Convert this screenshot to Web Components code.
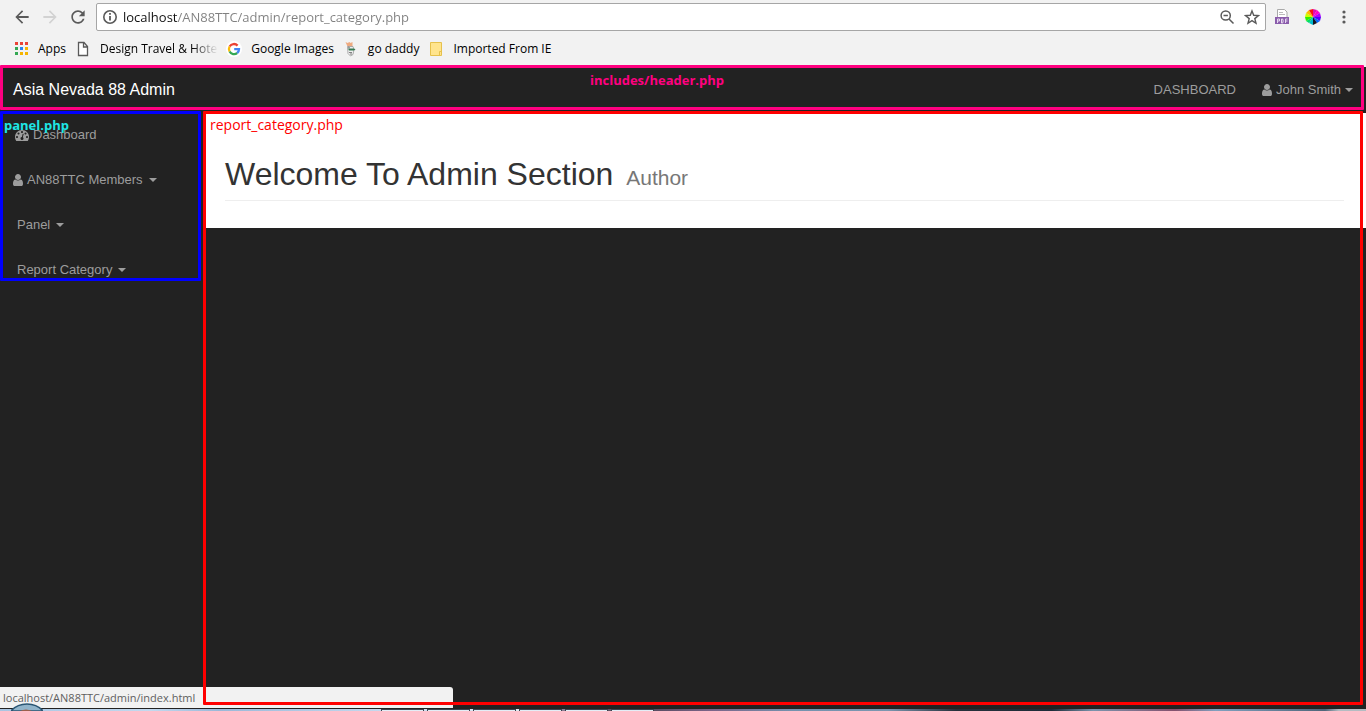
<!DOCTYPE html>
<html lang="en">
<head>
<meta charset="utf-8">
<title>Asia Nevada 88 Admin</title>
<style>
  body { margin: 0; background: #222; }
</style>
</head>
<body>
<app-window></app-window>

<template id="tpl-toolbar">
  <style>
    :host { display: block; height: 67px; box-sizing: border-box; background: #f2f2f2; font: 13px/20px "Open Sans", sans-serif; color: #000; }
    .row { display: flex; align-items: center; height: 34px; box-sizing: border-box; padding: 0 12px; }
    button { border: 0; background: none; padding: 0; margin: 0; display: flex; align-items: center; justify-content: center; width: 20px; height: 20px; color: #5a5a5a; flex: none; }
    button:disabled { color: #d2d2d2; }
    svg { display: block; }
    .nav { display: flex; gap: 8px; }
    .address { flex: 1; display: flex; align-items: center; gap: 5px; height: 26px; margin-left: 8px; padding: 0 3px 0 5px; background: #fff; border: 1px solid #a6a6a6; border-radius: 2px; }
    input { flex: 1; min-width: 0; border: 0; outline: 0; padding: 0; margin: 0; height: 22px; font: inherit; color: transparent; background: linear-gradient(90deg, #111 55px, #808080 55px); -webkit-background-clip: text; background-clip: text; }
    .actions { display: flex; gap: 5px; }
    .ext { display: flex; gap: 11px; margin-left: 6px; }
    nav { display: flex; align-items: center; height: 29px; padding: 0 14px; font-size: 12px; gap: 9px; }
    a { display: flex; align-items: center; gap: 9px; color: inherit; text-decoration: none; white-space: nowrap; }
    .fade { -webkit-mask-image: linear-gradient(90deg, #000 92px, transparent 118px); mask-image: linear-gradient(90deg, #000 92px, transparent 118px); }
  </style>
  <div class="row">
    <div class="nav">
      <button aria-label="Back"><svg width="20" height="20" viewBox="0 0 24 24" fill="currentColor"><path d="M20 10.7H7.8l5.6-5.3L12 4l-8 8 8 8 1.4-1.4-5.6-5.3H20z"/></svg></button>
      <button aria-label="Forward" disabled><svg width="20" height="20" viewBox="0 0 24 24" fill="currentColor"><path d="M4 10.7h12.2l-5.6-5.3L12 4l8 8-8 8-1.4-1.4 5.6-5.3H4z"/></svg></button>
      <button aria-label="Reload"><svg width="22" height="22" viewBox="0 0 24 24" fill="currentColor"><path d="M17.65 6.35C16.2 4.9 14.21 4 12 4c-4.42 0-7.99 3.58-7.99 8s3.57 8 7.99 8c3.73 0 6.84-2.55 7.73-6h-2.08c-.82 2.33-3.04 4-5.65 4-3.31 0-6-2.69-6-6s2.69-6 6-6c1.66 0 3.14.69 4.22 1.78L13 11h7V4l-2.35 2.35z"/></svg></button>
    </div>
    <div class="address">
      <svg width="16" height="16" viewBox="0 0 16 16" fill="none" stroke="#5a5a5a"><circle cx="8" cy="8" r="6.2" stroke-width="1.6"/><path d="M8 7v4.5M8 4v1.7" stroke-width="1.8"/></svg>
      <input type="text" aria-label="Address" value="localhost/AN88TTC/admin/report_category.php" spellcheck="false">
      <div class="actions">
        <button aria-label="Zoom"><svg width="16" height="16" viewBox="0 0 16 16" fill="none" stroke="currentColor" stroke-width="1.5"><circle cx="6.7" cy="6.5" r="4.6"/><path d="M4.5 6.5h4.4M10 10l4.5 4.5"/></svg></button>
        <button aria-label="Bookmark this page"><svg width="16" height="16" viewBox="0 0 16 16" fill="none" stroke="currentColor" stroke-width="1.4"><path d="M8 1.9l1.7 4.4 4.8.3-3.7 3 1.2 4.7L8 11.700l-4 2.600 1.200-4.700-3.700-3 4.800-.3z"/></svg></button>
      </div>
    </div>
    <div class="ext">
      <button aria-label="PDF tools"><svg width="16" height="18" viewBox="0 0 16 18"><path d="M3.500 9V1.500h7l2.500 2.500V9" fill="#fff" stroke="#aaa"/><path d="M5 4.500h4M5 6.500h6" stroke="#bbb"/><path d="M1 9h14v7H1z" fill="#8a5cab"/><path d="M3.500 15v-4h2v2h-2M7.500 11v4h1.200q1-2 0-4zM11.500 15v-4h2M11.500 13h2" fill="none" stroke="#e6d8f0"/></svg></button>
      <button aria-label="Colour picker"><svg width="16" height="16" viewBox="0 0 16 16"><path d="M8 8V0L12 1z" fill="#e010b0"/><path d="M8 8l4-7 3 3z" fill="#f0c"/><path d="M8 8l7-4 1 4z" fill="#a0f"/><path d="M8 8h8l-1 4z" fill="#50f"/><path d="M8 8l7 4-3 2z" fill="#06f"/><path d="M8 8l4 6-4 2z" fill="#112"/><path d="M8 8v8l-4-2z" fill="#0bc"/><path d="M8 8l-4 6-3-2z" fill="#0d6"/><path d="M8 8l-7 4-1-4z" fill="#3e0"/><path d="M8 8H0l1-4z" fill="#cf0"/><path d="M8 8L1 4l3-3z" fill="#fb0"/><path d="M8 8L4 1l4-1z" fill="#f11"/></svg></button>
      <button aria-label="Menu"><svg width="16" height="16" viewBox="0 0 16 16" fill="currentColor"><circle cx="8" cy="3" r="1.600"/><circle cx="8" cy="8" r="1.600"/><circle cx="8" cy="13" r="1.600"/></svg></button>
    </div>
  </div>
  <nav aria-label="Bookmarks">
    <a href="#apps"><svg width="15" height="15" viewBox="0 0 15 15"><path d="M1 1h3v3H1zM6 1h3v3H6zM11 1h3v3h-3z" fill="#ea4335"/><path d="M1 6h3v3H1zM1 11h3v3H1z" fill="#34a853"/><path d="M6 6h3v3H6z" fill="#2a84f0"/><path d="M11 6h3v3h-3zM6 11h3v3H6zM11 11h3v3h-3z" fill="#f5b400"/></svg><span>Apps</span></a>
    <a href="#design"><svg width="16" height="16" viewBox="0 0 16 16" fill="#fff" stroke="#5a5a5a" stroke-width="1.300"><path d="M3.500 1.500h5.500l3.500 4v9h-9zM8.500 1.500v4.500h4"/></svg><span class="fade">Design Travel &amp; Hote</span></a>
    <a href="#images"><svg width="16" height="16" viewBox="0 0 16 16" fill="none" stroke-width="2.300"><circle cx="8" cy="8" r="8" fill="#fff" stroke="none"/><path d="M3.600 5.500A5 5 0 0 1 11.600 4.600" stroke="#ea4335"/><path d="M3.600 5.500a5 5 0 0 0 0 5" stroke="#fbbc05"/><path d="M3.600 10.500a5 5 0 0 0 7.600 1.500" stroke="#34a853"/><path d="M11.200 12A5 5 0 0 0 13 8.200H8.200" stroke="#4285f4"/></svg><span>Google Images</span></a>
    <a href="#godaddy"><svg width="16" height="16" viewBox="0 0 16 16"><path d="M2.500 1l2 1 2-1 1 1 2-1v4.500h-5z" fill="#eeaa80"/><path d="M4.500 5.500h5.500l1 3-1 5-2.500 1.500-2.500-2.500z" fill="#eee" stroke="#999" stroke-width=".8"/><path d="M5 7.500h6l1.500 1-1.500 1H6z" fill="#367a52"/><path d="M6 11.500h3M7 13h2M5 6l2 1" stroke="#666" stroke-width=".8"/></svg><span>go daddy</span></a>
    <a href="#imported"><svg width="16" height="16" viewBox="0 0 16 16"><path d="M2.500 1.500h11v13h-11z" fill="#ffe48d" stroke="#e6c14c"/><path d="M11.500 14.500v-4h2" fill="none" stroke="#e6c14c"/></svg><span>Imported From IE</span></a>
  </nav>
</template>

<template id="tpl-note">
  <style>
    :host { display: block; position: absolute; box-sizing: border-box; border: 3px solid var(--note-line); border-radius: 1px; color: var(--note-ink, var(--note-line)); font: var(--note-weight, 400) var(--note-size, 13px)/18px "Open Sans", sans-serif; text-align: var(--note-align, left); padding: 2px 4px; pointer-events: none; z-index: 2; }
    :host([tight]) { padding: 2px 1px; }
  </style>
  <slot></slot>
</template>

<template id="tpl-header">
  <style>
    :host { display: flex; position: relative; align-items: center; justify-content: space-between; box-sizing: border-box; height: 46px; padding: 0 13px; background: #222; color: #9d9d9d; font: 13px/20px "Liberation Sans", Arial, sans-serif; }
    a { color: inherit; text-decoration: none; display: flex; align-items: center; white-space: nowrap; }
    .brand { color: #fff; font-size: 16px; }
    nav { display: flex; gap: 24px; }
    .user { gap: 2px; }
    .caret { border: 4px solid transparent; border-top-color: currentColor; border-bottom: 0; margin-left: 2px; }
    note-frame { inset: -2px 2px 3px 0; --note-line: #ff0080; --note-weight: 700; --note-align: center; padding: 3px 50px 0 0; }
  </style>
  <a class="brand" href="#home">Asia Nevada 88 Admin</a>
  <nav>
    <a href="#dashboard">DASHBOARD</a>
    <a class="user" href="#user"><fa-icon name="user"></fa-icon>John Smith <span class="caret"></span></a>
  </nav>
  <note-frame>includes/header.php</note-frame>
</template>

<template id="tpl-side">
  <style>
    :host { display: block; position: relative; width: 206px; box-sizing: border-box; color: #9d9d9d; font: 13px/20px "Liberation Sans", Arial, sans-serif; }
    ul { list-style: none; margin: 0; padding: 0; }
    li { height: 45px; padding: 0 17px 2px; box-sizing: border-box; display: flex; align-items: center; }
    li.icon { padding-left: 11px; }
    li.wide { padding-left: 15px; }
    a { display: flex; align-items: center; color: inherit; text-decoration: none; gap: 2px; }
    .wide a { gap: 4px; }
    .caret { border: 4px solid transparent; border-top-color: currentColor; border-bottom: 0; margin-left: 4px; }
    note-frame { inset: -2px 5px auto 0; height: 170px; --note-line: #00f; --note-ink: #1fe6e6; --note-weight: 700; }
  </style>
  <ul>
    <li class="wide"><a href="#dashboard"><fa-icon name="tachometer"></fa-icon>Dashboard</a></li>
    <li class="icon"><a href="#members"><fa-icon name="user"></fa-icon>AN88TTC Members <span class="caret"></span></a></li>
    <li><a href="#panel">Panel <span class="caret"></span></a></li>
    <li><a href="#report">Report Category <span class="caret"></span></a></li>
  </ul>
  <note-frame tight>panel.php</note-frame>
</template>

<template id="tpl-content">
  <style>
    :host { display: block; position: relative; min-width: 0; font-family: "Liberation Sans", Arial, sans-serif; }
    section { background: #fff; height: 115px; box-sizing: border-box; padding: 36px 22px 0 19px; }
    h1 { margin: 0; height: 52px; box-sizing: border-box; padding-top: 5px; border-bottom: 1px solid #eee; font-size: 32px; line-height: 40px; font-weight: 400; color: #333; white-space: nowrap; }
    small { font-size: 21px; color: #777; margin-left: 4px; }
    note-frame { inset: -2px 3px 4px -3px; --note-line: #f00; --note-size: 14px; }
  </style>
  <section><h1>Welcome To Admin Section <small>Author</small></h1></section>
  <note-frame>report_category.php</note-frame>
</template>

<template id="tpl-status">
  <style>
    :host { display: block; position: absolute; left: 0; bottom: 3px; width: 453px; height: 21px; box-sizing: border-box; padding-left: 3px; background: #f2f2f2; border-radius: 0 3px 0 0; color: #5f5f5f; font: 11px/21px "Open Sans", sans-serif; z-index: 1; }
  </style>
  <slot></slot>
</template>

<template id="tpl-taskbar">
  <style>
    :host { display: block; position: relative; height: 2px; background: linear-gradient(90deg, #a9c5e2 0, #c3d9ef 11%, #9ab8d8 16%, #c5d9ef 28%, #dfe9f2 38%, #a99ab5 39%, #4a4252 46%, #7c6488 52%, #7492ae 58%, #7c96b0 65%, #26303a 70%, #1d2b38 77%, #7a94ad 80%, #85506d 86%, #80a0bf 89%, #4e6579 97%, #b4bcc2 98%); }
    svg { position: absolute; left: 11px; bottom: 0; z-index: 2; display: block; }
    .tabs { display: flex; height: 2px; padding-left: 381px; gap: 3px; }
    .tabs span { width: 43px; height: 2px; box-sizing: border-box; border: 1px solid #38434d; border-bottom: 0; background: #e3edf6; }
  </style>
  <svg width="32" height="8" viewBox="0 0 32 8"><path d="M0 8Q6 1 16 1t16 7z" fill="#91b4ca" stroke="#2a5674" stroke-width="1.500"/><path d="M9 8q6-3 12 0z" fill="#9c604c"/></svg>
  <div class="tabs"><span></span><span></span><span></span><span></span><span></span><span></span></div>
</template>

<template id="tpl-window">
  <style>
    :host { display: flex; flex-direction: column; position: relative; min-height: 100vh; background: #222; }
    main { flex: 1; display: grid; grid-template-columns: auto 1fr; }
  </style>
  <browser-toolbar></browser-toolbar>
  <admin-header></admin-header>
  <main>
    <side-panel></side-panel>
    <report-category></report-category>
  </main>
  <status-bubble>localhost/AN88TTC/admin/index.html</status-bubble>
  <task-bar></task-bar>
</template>

<script>
  const define = (name, templateId) => customElements.define(name, class extends HTMLElement {
    constructor() {
      super();
      this.attachShadow({ mode: "open" }).append(document.getElementById(templateId).content.cloneNode(true));
    }
  });

  const GLYPHS = {
    user: [14, "M1536 1399q0 109-62.5 187t-150.5 78h-854q-88 0-150.5-78t-62.5-187q0-85 8.5-160.5t31.5-152 58.5-131 94-89 134.5-34.5q131 128 313 128t313-128q76 0 134.5 34.5t94 89 58.5 131 31.5 152 8.5 160.5zm-256-887q0 159-112.5 271.5t-271.5 112.5-271.5-112.5-112.5-271.5 112.5-271.5 271.5-112.5 271.5 112.5 112.5 271.5z"],
    tachometer: [14, "M384 1152q0-53-37.5-90.5t-90.5-37.5-90.5 37.5-37.5 90.5 37.5 90.5 90.5 37.5 90.5-37.5 37.5-90.5zm192-448q0-53-37.5-90.5t-90.5-37.5-90.5 37.5-37.5 90.5 37.5 90.5 90.5 37.5 90.5-37.5 37.5-90.5zm428 481l101-382q6-26-7.5-48.5t-38.5-29.5-48 6.5-30 39.5l-101 382q-60 5-107 43.5t-63 98.5q-20 77 20 146t117 89 146-20 89-117q16-60-6-117t-72-91zm660-33q0-53-37.5-90.5t-90.5-37.5-90.5 37.5-37.5 90.5 37.5 90.5 90.5 37.5 90.5-37.5 37.5-90.5zm-640-640q0-53-37.5-90.5t-90.5-37.5-90.5 37.5-37.5 90.5 37.5 90.5 90.5 37.5 90.5-37.5 37.5-90.5zm448 192q0-53-37.5-90.5t-90.5-37.5-90.5 37.5-37.5 90.5 37.5 90.5 90.5 37.5 90.5-37.5 37.5-90.5zm320 448q0 261-141 483-19 29-54 29h-1402q-35 0-54-29-141-221-141-483 0-182 71-348t191-286 286-191 348-71 348 71 286 191 191 286 71 348z"]
  };
  customElements.define("fa-icon", class extends HTMLElement {
    constructor() {
      super();
      this.attachShadow({ mode: "open" });
    }
    connectedCallback() {
      const [size, path] = GLYPHS[this.getAttribute("name")];
      this.shadowRoot.innerHTML = `<style>:host{display:block}svg{display:block}</style>
        <svg width="${size}" height="${size}" viewBox="0 0 1792 1792" fill="currentColor" aria-hidden="true"><path d="${path}"/></svg>`;
    }
  });

  define("note-frame", "tpl-note");
  define("browser-toolbar", "tpl-toolbar");
  define("admin-header", "tpl-header");
  define("side-panel", "tpl-side");
  define("report-category", "tpl-content");
  define("status-bubble", "tpl-status");
  define("task-bar", "tpl-taskbar");
  define("app-window", "tpl-window");
</script>
</body>
</html>
